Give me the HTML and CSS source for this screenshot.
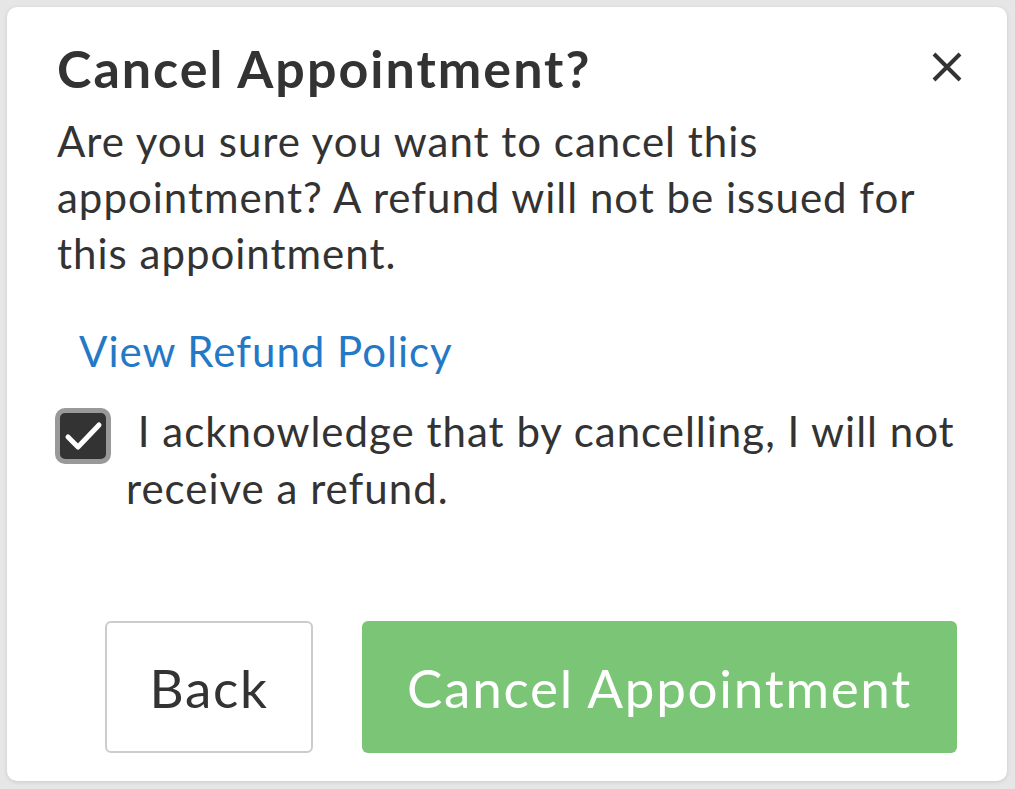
FILE: index.html
```html
<!DOCTYPE html>
<html lang="en">
<head>
<meta charset="utf-8">
<title>Cancel Appointment</title>
<link rel="stylesheet" href="styles.css">
</head>
<body>
  <div class="modal" role="dialog" aria-labelledby="modal-title">
    <header class="modal-header">
      <h1 id="modal-title" class="modal-title">Cancel Appointment?</h1>
      <button class="close-btn" aria-label="Close">
        <svg viewBox="0 0 30 30" width="30" height="30" aria-hidden="true">
          <path d="M2 2 L28 28 M28 2 L2 28" stroke="#333" stroke-width="4" fill="none"/>
        </svg>
      </button>
    </header>
    <p class="modal-text">Are you sure you want to cancel this appointment? A refund will not be issued for this appointment.</p>
    <a class="policy-link" href="#">View Refund Policy</a>
    <label class="ack">
      <span class="checkbox" aria-hidden="true">
        <svg viewBox="0 0 46 46" width="46" height="46">
          <path d="M8 24 L18 34 L39 12" stroke="#fff" stroke-width="5" stroke-linecap="round" stroke-linejoin="round" fill="none"/>
        </svg>
      </span>
      <span class="ack-text">&nbsp;I acknowledge that by cancelling, I will not receive a refund.</span>
    </label>
    <div class="actions">
      <button class="btn btn-back">Back</button>
      <button class="btn btn-confirm">Cancel Appointment</button>
    </div>
  </div>
</body>
</html>
```
FILE: styles.css
```css
html, body {
  margin: 0;
  padding: 0;
}

body {
  background: #e6e6e6;
  font-family: "Lato", "Liberation Sans", sans-serif;
  color: #333;
  padding: 7px 8px 8px 7px;
  box-sizing: border-box;
  height: 789px;
}

.modal {
  background: #fff;
  border-radius: 10px;
  box-shadow: 0 1px 4px rgba(0, 0, 0, 0.12);
  height: 774px;
  box-sizing: border-box;
  padding: 31px 50px 28px 50px;
  display: flex;
  flex-direction: column;
}

.modal-header {
  display: flex;
  justify-content: space-between;
  align-items: flex-start;
}

.modal-title {
  margin: 0;
  font-size: 52px;
  font-weight: 700;
  line-height: 60px;
  letter-spacing: 2px;
}

.close-btn {
  border: 0;
  background: none;
  padding: 0;
  margin-top: 14px;
  margin-right: -5px;
  width: 30px;
  height: 30px;
}

.close-btn svg {
  display: block;
}

.modal-text {
  margin: 15px 0 0;
  font-size: 42px;
  line-height: 56px;
  letter-spacing: 1px;
}

.policy-link {
  margin-top: 42px;
  margin-left: 22px;
  color: #2479c6;
  text-decoration: none;
  font-size: 42px;
  line-height: 56px;
  letter-spacing: 1px;
  align-self: flex-start;
}

.ack {
  margin-top: 24px;
  display: flex;
  align-items: flex-start;
  font-size: 42px;
  line-height: 57px;
  letter-spacing: 1px;
}

.checkbox {
  flex: none;
  width: 46px;
  height: 46px;
  margin: 5px 15px 0 -2px;
  background: #333;
  border: 5px solid #999;
  border-radius: 10px;
}

.checkbox svg {
  display: block;
}

.actions {
  margin-top: auto;
  display: flex;
  justify-content: flex-end;
  gap: 49px;
}

.btn {
  font-family: inherit;
  font-size: 53px;
  letter-spacing: 1.7px;
  height: 132px;
  border-radius: 6px;
  cursor: pointer;
}

.btn-back {
  width: 208px;
  background: #fff;
  border: 2px solid #ccc;
  color: #333;
}

.btn-confirm {
  width: 595px;
  background: #7bc576;
  border: 0;
  color: #fff;
}
```
